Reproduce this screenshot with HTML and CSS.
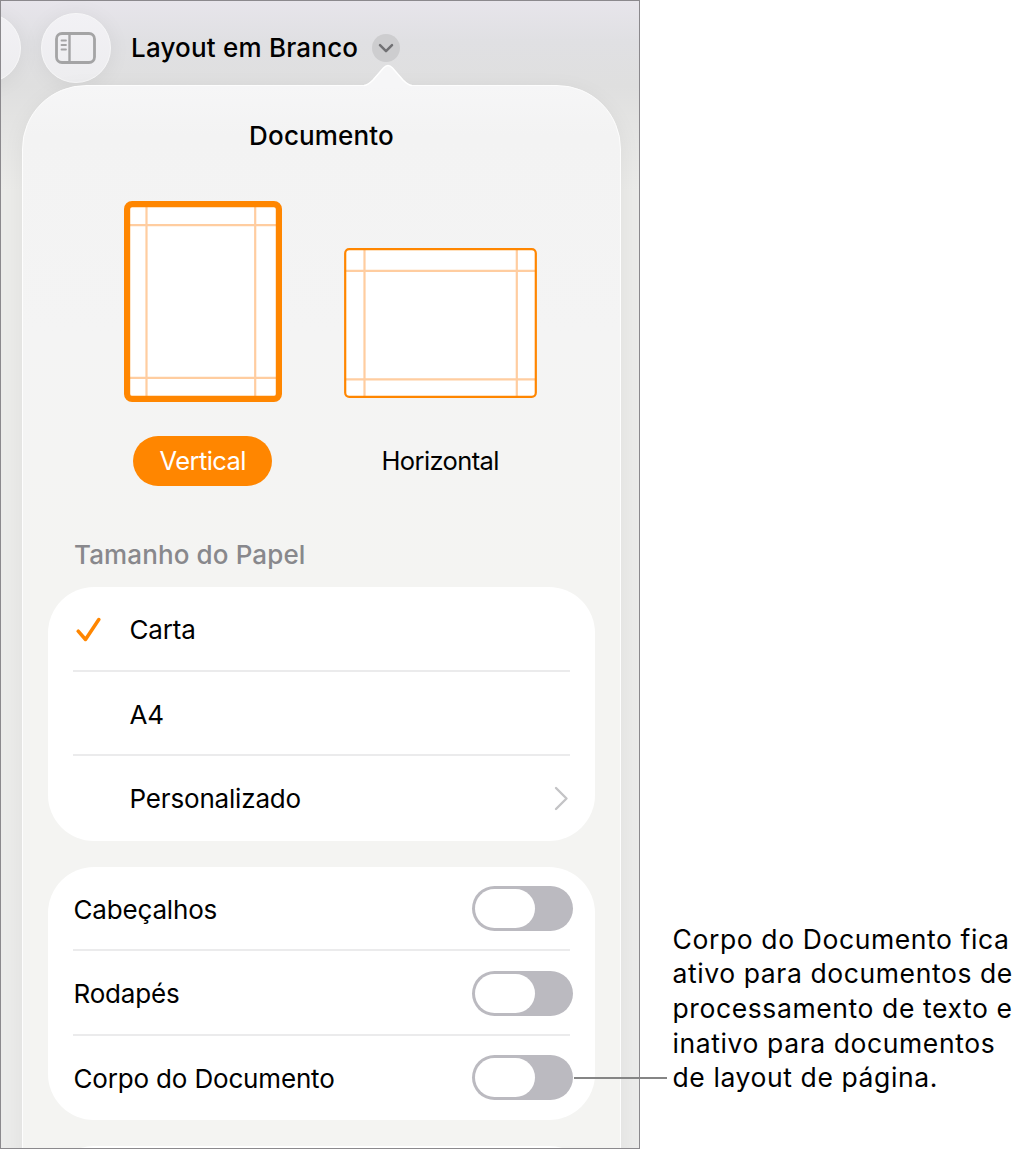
FILE: index.html
```html
<!DOCTYPE html>
<html lang="pt-BR">
<head>
<meta charset="utf-8">
<title>Layout em Branco</title>
<link rel="stylesheet" href="styles.css">
</head>
<body>
<main class="figure">
  <section class="screen">
    <header class="toolbar">
      <span class="round-button round-button-cut"></span>
      <span class="round-button">
        <svg width="42" height="33" viewBox="0 0 42 33" fill="none" stroke="#a4a4a5">
          <rect x="1.5" y="1.5" width="38" height="29" rx="5.5" stroke-width="2.8"/>
          <path d="M14.5 2v28" stroke-width="2.4"/>
          <path d="M6.5 8.500h4.500M6.500 13h4.500M6.500 17.500h4.500" stroke-width="1.8" stroke-linecap="round"/>
        </svg>
      </span>
      <h1 class="doc-title">Layout em Branco</h1>
      <span class="title-menu">
        <svg width="16" height="11" viewBox="0 0 16 11" fill="none" stroke="#717174" stroke-width="2.5" stroke-linecap="round" stroke-linejoin="round"><path d="M2 2.2l6 6 6-6"/></svg>
      </span>
    </header>
    <div class="popover">
      <svg class="popover-arrow" width="48" height="24" viewBox="0 0 48 24">
        <path d="M0 21.500C4 21 6 19 9 16L19.500 4Q24-1 28.500 4L39 16C42 19 44 21 48 21.500V24H0Z" fill="#f6f6f7"/>
        <path d="M0 21.500C4 21 6 19 9 16L19.500 4Q24-1 28.500 4L39 16C42 19 44 21 48 21.500" fill="none" stroke="#fff" stroke-width="1.5"/>
      </svg>
      <h2 class="popover-title">Documento</h2>
      <div class="orientations">
        <div class="orientation">
          <svg width="158" height="201" viewBox="0 0 158 201">
            <rect x="3" y="3" width="152" height="195" rx="5" fill="#fff"/>
            <path d="M22.500 4v193M131.200 4v193M4 24.200h150M4 176.800h150" stroke="#ffcda0" stroke-width="2.2"/>
            <rect x="3.100" y="3.100" width="151.800" height="194.800" rx="5" fill="none" stroke="#ff8600" stroke-width="6.200"/>
          </svg>
          <span class="choice choice-selected">Vertical</span>
        </div>
        <div class="orientation">
          <svg width="193" height="150" viewBox="0 0 193 150">
            <rect x="1" y="1" width="191" height="148" rx="4" fill="#fff"/>
            <path d="M20.500 2v146M172.800 2v146M2 22.800h189M2 131.400h189" stroke="#ffcda0" stroke-width="2.2"/>
            <rect x="1.200" y="1.200" width="190.600" height="147.600" rx="4" fill="none" stroke="#ff8600" stroke-width="2.200"/>
          </svg>
          <span class="choice">Horizontal</span>
        </div>
      </div>
      <h3 class="group-title">Tamanho do Papel</h3>
      <div class="card">
        <div class="row">
          <span class="mark"><svg width="26" height="26" viewBox="0 0 26 26" fill="none" stroke="#ff8600" stroke-width="3.500" stroke-linecap="round" stroke-linejoin="round"><path d="M2.200 14.200l7.300 8.300L22.800 2.500"/></svg></span>
          <span class="label">Carta</span>
        </div>
        <div class="row"><span class="mark"></span><span class="label">A4</span></div>
        <div class="row">
          <span class="mark"></span><span class="label">Personalizado</span>
          <svg class="disclosure" width="15" height="25" viewBox="0 0 15 25" fill="none" stroke="#c4c4c6" stroke-width="2.400" stroke-linecap="round" stroke-linejoin="round"><path d="M2 2l10.500 10.500L2 23"/></svg>
        </div>
      </div>
      <div class="card">
        <div class="row"><span class="label">Cabeçalhos</span><span class="switch"><span class="knob"></span></span></div>
        <div class="row"><span class="label">Rodapés</span><span class="switch"><span class="knob"></span></span></div>
        <div class="row"><span class="label">Corpo do Documento</span><span class="switch"><span class="knob"></span></span></div>
      </div>
      <div class="card"></div>
    </div>
  </section>
  <aside class="callout">
    <span class="leader"></span>
    <p class="callout-text">Corpo do Documento fica<br>ativo para documentos de<br>processamento de texto e<br>inativo para documentos<br>de layout de página.</p>
  </aside>
</main>
</body>
</html>
```
FILE: styles.css
```css
* { box-sizing: border-box; }

body {
  margin: 0;
  background: #fff;
  color: #000;
  font-family: Inter, "Liberation Sans", sans-serif;
  font-size: 26px;
  overflow: hidden;
}

h1, h2, h3, p { margin: 0; }
svg { display: block; flex: none; }
span { white-space: nowrap; }

.figure {
  display: flex;
  width: 1021px;
  height: 1149px;
}

.screen {
  flex: none;
  width: 640px;
  height: 1149px;
  border: 1px solid #8b898d;
  overflow: hidden;
  background: linear-gradient(#e7e5eb 0, #e0e0e3 40px, #dfdfdf 85px, #e4e4e3 125px, #ebebe9 190px, #ebebea 100%);
}

.toolbar {
  display: flex;
  align-items: center;
  height: 83px;
  padding-top: 11px;
}

.round-button {
  display: flex;
  align-items: center;
  justify-content: center;
  flex: none;
  width: 70px;
  height: 70px;
  margin-right: 20px;
  border: 1px solid #f7f7f8;
  border-radius: 50%;
  background: linear-gradient(#f2f1f5, #ededef);
  box-shadow: 0 2px 22px rgba(0, 0, 0, 0.06);
}

.round-button-cut { margin-left: -50px; }

.doc-title {
  width: 241px;
  font-size: 26px;
  font-weight: 550;
  letter-spacing: 0.200px;
  line-height: 32px;
  white-space: nowrap;
}

.title-menu {
  display: flex;
  align-items: center;
  justify-content: center;
  width: 28px;
  height: 28px;
  border-radius: 50%;
  background: #cdcdcf;
}

.popover {
  position: relative;
  width: 599px;
  height: 1180px;
  margin: 1px 0 0 21px;
  padding: 0 25px;
  border: 1.500px solid #fdfdfd;
  border-radius: 64px 64px 0 0;
  background: linear-gradient(#f6f6f7 0, #f3f3f3 50px, #f4f4f4 250px, #f4f4f2 500px);
  box-shadow: 0 4px 22px rgba(0, 0, 0, 0.05);
}

.popover-arrow {
  position: absolute;
  top: -22px;
  left: 341px;
}

.popover-title {
  padding-top: 34px;
  font-size: 26px;
  font-weight: 550;
  letter-spacing: 0.150px;
  line-height: 32px;
  text-align: center;
}

.orientations {
  display: flex;
  align-items: flex-end;
  gap: 62px;
  height: 334px;
  padding-left: 75.700px;
}

.orientation {
  display: flex;
  flex-direction: column;
  align-items: center;
  gap: 34px;
}

.orientation:last-child { gap: 38px; }

.choice {
  display: flex;
  align-items: center;
  justify-content: center;
  width: 139px;
  height: 50px;
  padding-bottom: 2px;
  border-radius: 25px;
  font-size: 25.500px;
  letter-spacing: -0.600px;
}

.choice-selected { background: #ff8600; color: #fff; }

.group-title {
  margin-top: 53px;
  padding-left: 26px;
  color: #88888c;
  font-size: 26px;
  font-weight: 500;
  letter-spacing: 0.120px;
  line-height: 32px;
}

.card {
  width: 547px;
  height: 253.500px;
  margin-bottom: 26px;
  padding: 0 25px;
  border-radius: 46px;
  background: #fff;
}

.group-title + .card { margin-top: 16px; }

.row {
  display: flex;
  align-items: center;
  width: 497px;
  height: 84.500px;
  padding-top: 2px;
  border-bottom: 2px solid #ebebec;
}

.row:last-child { border-bottom-color: transparent; }

.label { padding: 1px 0 0 0.500px; letter-spacing: -0.170px; }
.mark { flex: none; width: 56px; padding: 1px 0 0 3px; }
.disclosure { margin-left: auto; margin-right: 1px; }

.switch {
  flex: none;
  width: 101px;
  height: 45px;
  margin-left: auto;
  margin-right: -3px;
  padding: 3px;
  border-radius: 23px;
  background: #bbbac0;
}

.knob {
  display: block;
  width: 60px;
  height: 39px;
  border-radius: 20px;
  background: #fff;
}

.callout {
  display: flex;
  align-items: flex-start;
  flex: none;
  height: 200px;
  margin-top: 921px;
  margin-left: -66px;
}

.leader {
  position: relative;
  width: 93px;
  height: 2px;
  margin-top: 156px;
  background: #858585;
}

.callout-text {
  margin-left: 5.500px;
  padding-top: 0.500px;
  font-size: 26.500px;
  letter-spacing: 0.600px;
  line-height: 34.700px;
  white-space: nowrap;
}
```
